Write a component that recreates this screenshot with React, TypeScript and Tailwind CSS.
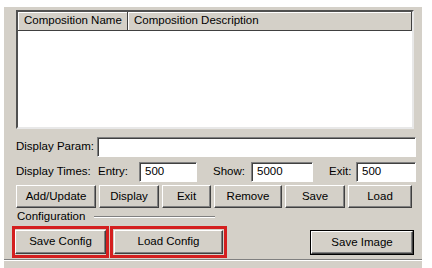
import React from 'react';

const FONT = { fontFamily: '"Liberation Sans", Arial, sans-serif' };

function Btn({ label, className = '' }: { label: string; className?: string }) {
  return (
    <div
      className={`flex items-center justify-center whitespace-nowrap bg-[#d4d0c8] border border-t-white border-l-white border-r-[#404040] border-b-[#404040] shadow-[inset_-1px_-1px_0_#808080] text-[11.5px] text-black ${className}`}
    >
      {label}
    </div>
  );
}

function Field({ value = '', className = '' }: { value?: string; className?: string }) {
  return (
    <div
      className={`flex items-center bg-white border border-t-[#808080] border-l-[#808080] border-r-white border-b-white shadow-[inset_1px_1px_0_#404040] pl-[5px] text-[11.5px] text-black ${className}`}
    >
      {value}
    </div>
  );
}

function App() {
  return (
    <div className="w-[432px] h-[268px] bg-white overflow-hidden text-black" style={FONT}>
      <div className="ml-[4px] mt-[7px] w-[418px] h-[261px] bg-[#d4d0c8] pl-[12px] pr-[8px] pt-[3px] flex flex-col">
        {/* composition table */}
        <div className="h-[119px] w-[398px] bg-white border-2 border-t-[#505050] border-l-[#505050] border-r-[#e8e8e8] border-b-[#e8e8e8] flex flex-col">
          <div className="flex h-[19px] bg-[#d4d0c8] border-b border-[#404040] text-[11.5px] whitespace-nowrap">
            <div className="w-[110px] flex items-center pl-[6px] border-r border-[#404040] shadow-[inset_1px_1px_0_white]">
              Composition Name
            </div>
            <div className="flex-1 flex items-center pl-[6px] shadow-[inset_1px_1px_0_white] border-r border-[#404040]">
              Composition Description
            </div>
          </div>
        </div>

        {/* display param */}
        <div className="mt-[8px] flex items-center h-[20px] text-[11.5px] whitespace-nowrap">
          <span className="w-[81px]">Display Param:</span>
          <Field className="flex-1 h-[20px] mr-[-2px]" />
        </div>

        {/* display times */}
        <div className="mt-[5px] flex items-center h-[20px] text-[11.5px] whitespace-nowrap">
          <span className="w-[82px]">Display Times:</span>
          <span className="w-[41px]">Entry:</span>
          <Field value="500" className="w-[58px] h-[20px]" />
          <span className="ml-[16px] w-[38px]">Show:</span>
          <Field value="5000" className="w-[62px] h-[20px]" />
          <span className="ml-[16px] w-[27px]">Exit:</span>
          <Field value="500" className="flex-1 h-[20px] mr-[-2px]" />
        </div>

        {/* action buttons */}
        <div className="mt-[3px] flex h-[23px] gap-[3px]">
          <Btn label="Add/Update" className="w-[80px]" />
          <Btn label="Display" className="w-[60px]" />
          <Btn label="Exit" className="w-[49px]" />
          <Btn label="Remove" className="w-[68px]" />
          <Btn label="Save" className="w-[60px]" />
          <Btn label="Load" className="w-[64px]" />
        </div>

        {/* configuration group */}
        <div className="mt-[2px] flex items-center h-[14px] text-[11.5px] leading-none whitespace-nowrap">
          <span className="ml-[1px]">Configuration</span>
          <div className="ml-[9px] w-[121px] h-[2px] border-t border-[#808080] border-b border-b-white" />
        </div>

        <div className="mt-[2px] flex items-start ml-[-4px]">
          <div className="border-[3px] border-[#d41f1f] w-[97px] h-[32px] flex items-center justify-center">
            <Btn label="Save Config" className="w-[91px] h-[24px]" />
          </div>
          <div className="ml-[1px] border-[3px] border-[#d41f1f] w-[117px] h-[32px] flex items-center pl-[1px]">
            <Btn label="Load Config" className="w-[109px] h-[24px]" />
          </div>
          <div className="ml-auto mt-[4px] border border-black">
            <Btn label="Save Image" className="w-[102px] h-[23px]" />
          </div>
        </div>

        <div className="mt-[1px] ml-[-12px] mr-[-8px] h-[2px] border-t border-[#808080] border-b border-b-white" />
      </div>
    </div>
  );
}

export default App;
